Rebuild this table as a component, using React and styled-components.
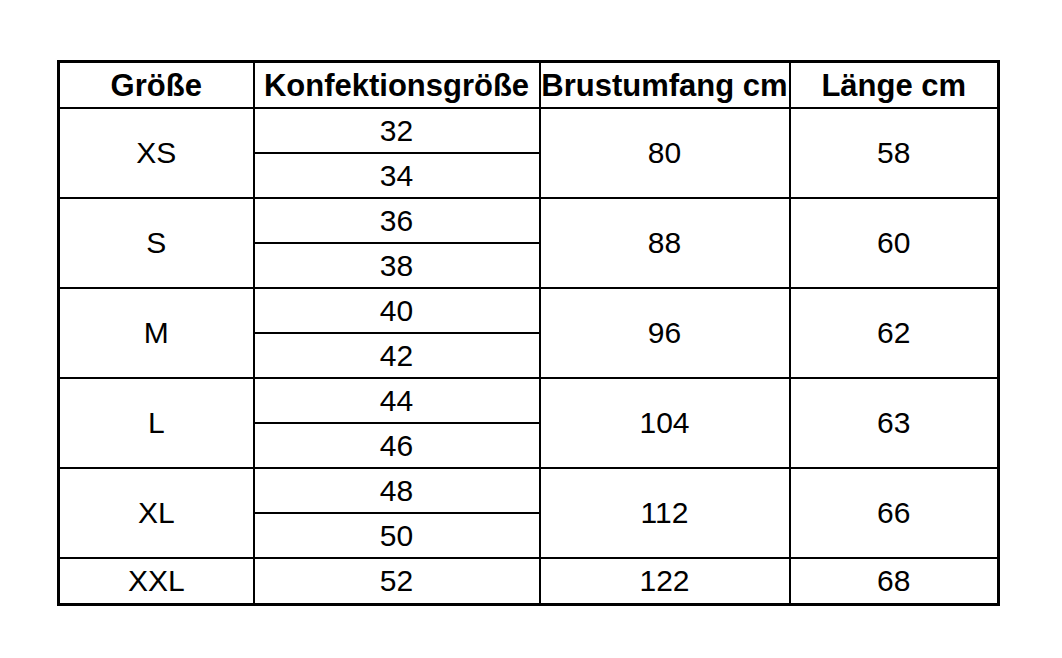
import React from "react";
import styled, { createGlobalStyle } from "styled-components";

const Global = createGlobalStyle`
  html, body { margin: 0; padding: 0; background: #fff; }
  body { font-family: "Liberation Sans", Arial, sans-serif; color: #000; }
`;

const Page = styled.div`
  padding: 60px 0 0 57px;
`;

const Table = styled.table`
  border-collapse: collapse;
  table-layout: fixed;
  width: 940px;
  border: 3px solid #000;
`;

const HeadCell = styled.th`
  height: 44px;
  padding: 0;
  border: 2px solid #000;
  font-family: "Liberation Sans", Arial, sans-serif;
  font-weight: 700;
  font-size: 31px;
  line-height: 1;
  text-align: center;
  white-space: nowrap;
  overflow: visible;
`;

const Cell = styled.td`
  height: ${(p) => (p.$tall ? "44px" : "43px")};
  padding: 0;
  border: 2px solid #000;
  font-family: "Liberation Sans", Arial, sans-serif;
  font-weight: 400;
  font-size: 30px;
  line-height: 1;
  text-align: center;
  vertical-align: middle;
`;

const rows = [
  { size: "XS", konf: ["32", "34"], brust: "80", laenge: "58" },
  { size: "S", konf: ["36", "38"], brust: "88", laenge: "60" },
  { size: "M", konf: ["40", "42"], brust: "96", laenge: "62" },
  { size: "L", konf: ["44", "46"], brust: "104", laenge: "63" },
  { size: "XL", konf: ["48", "50"], brust: "112", laenge: "66" },
  { size: "XXL", konf: ["52"], brust: "122", laenge: "68" },
];

export default function App() {
  return (
    <>
      <Global />
      <Page>
        <Table>
          <colgroup>
            <col style={{ width: 195 }} />
            <col style={{ width: 286 }} />
            <col style={{ width: 250 }} />
            <col style={{ width: 209 }} />
          </colgroup>
          <thead>
            <tr>
              <HeadCell>Größe</HeadCell>
              <HeadCell>Konfektionsgröße</HeadCell>
              <HeadCell>Brustumfang cm</HeadCell>
              <HeadCell>Länge cm</HeadCell>
            </tr>
          </thead>
          <tbody>
            {rows.map((r) =>
              r.konf.map((k, i) => {
                const tall = r.konf.length === 1;
                return (
                  <tr key={r.size + k}>
                    {i === 0 && (
                      <Cell $tall={tall} rowSpan={r.konf.length}>
                        {r.size}
                      </Cell>
                    )}
                    <Cell $tall={tall}>{k}</Cell>
                    {i === 0 && (
                      <Cell $tall={tall} rowSpan={r.konf.length}>
                        {r.brust}
                      </Cell>
                    )}
                    {i === 0 && (
                      <Cell $tall={tall} rowSpan={r.konf.length}>
                        {r.laenge}
                      </Cell>
                    )}
                  </tr>
                );
              })
            )}
          </tbody>
        </Table>
      </Page>
    </>
  );
}
